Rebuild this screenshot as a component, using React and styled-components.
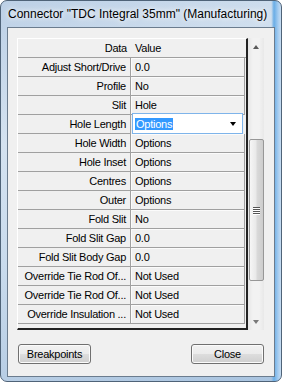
import styled, { createGlobalStyle } from "styled-components";

const GlobalStyle = createGlobalStyle`
  html, body {
    margin: 0;
    padding: 0;
    background: #ffffff;
  }
  * {
    box-sizing: border-box;
  }
`;

const Window = styled.div`
  width: 282px;
  height: 382px;
  border: 1px solid #4f6378;
  border-radius: 7px;
  padding: 0 6px 4px 6px;
  display: flex;
  flex-direction: column;
  overflow: hidden;
  background:
    linear-gradient(to right, rgba(0,0,0,0) 96.5%, #69ade6 97.5%, #a7cdf0 99%, #c7dcf0 100%),
    linear-gradient(160deg, #bcd0e6 0%, #d4e2f0 30%, #c9dbed 55%, #b7cde4 80%, #a9c4e0 100%);
`;

const TitleBar = styled.div`
  height: 26px;
  display: flex;
  align-items: center;
  padding-left: 1px;
  font-family: "Liberation Sans", Arial, sans-serif;
  font-size: 12px;
  color: #000;
  white-space: nowrap;
  text-shadow: 0 0 5px #fff, 0 0 8px rgba(255,255,255,0.8);
`;

const Client = styled.div`
  flex: 1;
  border: 1px solid #6b7c8e;
  background: #f0f0f0;
  display: flex;
  flex-direction: column;
  padding: 10px 10px 11px 9px;
  font-family: "Liberation Sans", Arial, sans-serif;
  font-size: 11px;
  letter-spacing: -0.25px;
  color: #000;
`;

const GridArea = styled.div`
  height: 292px;
  display: flex;
`;

const Grid = styled.div`
  width: 232px;
  border-top: 1px solid #ffffff;
  border-left: 1px solid #ffffff;
  border-right: 2px solid #222;
  border-bottom: 2px solid #222;
  display: flex;
  flex-direction: column;
`;

const Row = styled.div`
  display: flex;
  height: 19px;
  flex: none;
`;

const HeaderRow = styled(Row)`
  height: 19px;
  border-bottom: 1px solid #a0a0a0;
  line-height: 18px;
`;

const HeaderLabel = styled.div`
  width: 113px;
  text-align: right;
  padding-right: 4px;
`;

const HeaderValue = styled.div`
  padding-left: 4px;
`;

const Label = styled.div`
  width: 113px;
  border-right: 1px solid #a0a0a0;
  border-bottom: 1px solid #a0a0a0;
  text-align: right;
  padding-right: 4px;
  line-height: 18px;
  white-space: nowrap;
  overflow: hidden;
`;

const Value = styled.div`
  width: 114px;
  border-right: 1px solid #a0a0a0;
  border-bottom: 1px solid #a0a0a0;
  box-shadow: inset 1px 1px 0 #fbfbfb;
  padding-left: 4px;
  line-height: 18px;
  white-space: nowrap;
`;

const ComboCell = styled.div`
  width: 114px;
  position: relative;
`;

const Combo = styled.div`
  position: absolute;
  left: 1px;
  right: 2px;
  top: -2px;
  height: 21px;
  background: #fff;
  border: 1px solid #7eb4ea;
  display: flex;
  align-items: center;
  padding-left: 2px;
  padding-right: 6px;
`;

const Selected = styled.span`
  background: #3399ff;
  color: #fff;
  line-height: 12px;
  padding: 0 1px;
`;

const Arrow = styled.span`
  margin-left: auto;
  width: 0;
  height: 0;
  border-left: 3.5px solid transparent;
  border-right: 3.5px solid transparent;
  border-top: 4px solid #000;
`;

const ScrollBar = styled.div`
  width: 16px;
  display: flex;
  flex-direction: column;
  background: linear-gradient(to right, #e6e6e6, #f2f2f2 30%, #f2f2f2 70%, #e8e8e8);
`;

const ScrollButton = styled.div`
  height: 17px;
  flex: none;
  display: flex;
  align-items: center;
  justify-content: center;
`;

const ScrollGlyph = styled.span`
  width: 0;
  height: 0;
  border-left: 3.5px solid transparent;
  border-right: 3.5px solid transparent;
  ${(p) => (p.$down ? "border-top: 4px solid #7a7a7a;" : "border-bottom: 4px solid #5a5a5a;")}
`;

const Track = styled.div`
  flex: 1;
  display: flex;
  flex-direction: column;
  padding-top: ${(p) => p.$offset}px;
`;

const Thumb = styled.div`
  height: ${(p) => p.$size}px;
  margin: 0 0 0 1px;
  border: 1px solid #979797;
  border-radius: 2px;
  background: linear-gradient(to right, #f6f6f6, #e9e9e9 45%, #d9d9d9 55%, #cdcdcd);
  display: flex;
  flex-direction: column;
  align-items: center;
  justify-content: center;
  gap: 1px;
`;

const Grip = styled.span`
  width: 7px;
  height: 1px;
  background: #555;
  box-shadow: 0 1px 0 #fff;
`;

const ButtonRow = styled.div`
  margin-top: 14px;
  padding-left: 1px;
  display: flex;
  justify-content: space-between;
`;

const Button = styled.button`
  width: ${(p) => p.$width}px;
  height: 20px;
  border: 1px solid #707070;
  border-radius: 3px;
  background: linear-gradient(#f2f2f2 0%, #ebebeb 50%, #dddddd 50%, #cfcfcf 100%);
  box-shadow: inset 0 0 0 1px #fbfbfb;
  font-family: "Liberation Sans", Arial, sans-serif;
  font-size: 11px;
  letter-spacing: -0.25px;
  color: #000;
  padding: 0;
`;

const rows = [
  ["Adjust Short/Drive", "0.0"],
  ["Profile", "No"],
  ["Slit", "Hole"],
  ["Hole Length", "Options", true],
  ["Hole Width", "Options"],
  ["Hole Inset", "Options"],
  ["Centres", "Options"],
  ["Outer", "Options"],
  ["Fold Slit", "No"],
  ["Fold Slit Gap", "0.0"],
  ["Fold Slit Body Gap", "0.0"],
  ["Override Tie Rod Of...", "Not Used"],
  ["Override Tie Rod Of...", "Not Used"],
  ["Override Insulation ...", "Not Used"],
];

export default function App() {
  return (
    <>
      <GlobalStyle />
      <Window>
        <TitleBar>Connector "TDC Integral 35mm" (Manufacturing)</TitleBar>
        <Client>
          <GridArea>
            <Grid>
              <HeaderRow>
                <HeaderLabel>Data</HeaderLabel>
                <HeaderValue>Value</HeaderValue>
              </HeaderRow>
              {rows.map(([label, value, editing], i) => (
                <Row key={i}>
                  <Label>{label}</Label>
                  {editing ? (
                    <ComboCell>
                      <Combo>
                        <Selected>{value}</Selected>
                        <Arrow />
                      </Combo>
                    </ComboCell>
                  ) : (
                    <Value>{value}</Value>
                  )}
                </Row>
              ))}
            </Grid>
            <ScrollBar>
              <ScrollButton>
                <ScrollGlyph />
              </ScrollButton>
              <Track $offset={84}>
                <Thumb $size={142}>
                  <Grip />
                  <Grip />
                  <Grip />
                  <Grip />
                </Thumb>
              </Track>
              <ScrollButton>
                <ScrollGlyph $down />
              </ScrollButton>
            </ScrollBar>
          </GridArea>
          <ButtonRow>
            <Button $width={73}>Breakpoints</Button>
            <Button $width={73}>Close</Button>
          </ButtonRow>
        </Client>
      </Window>
    </>
  );
}
